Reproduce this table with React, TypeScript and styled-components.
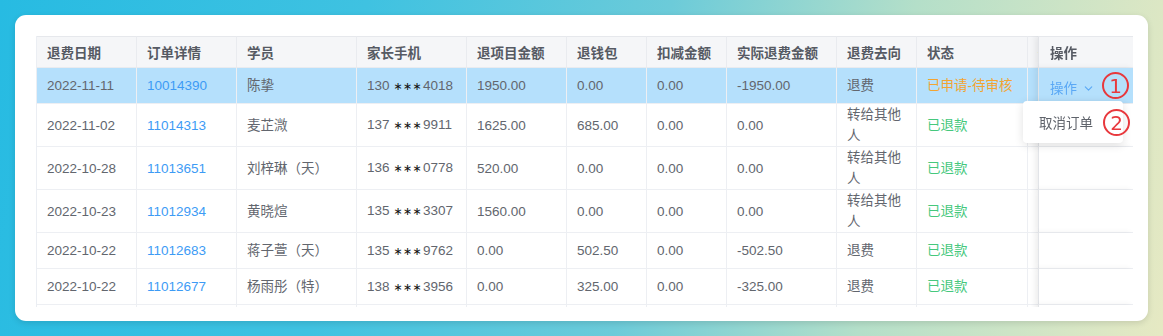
import React from "react";
import styled, { createGlobalStyle } from "styled-components";
import { ChevronDown } from "lucide-react";

const Global = createGlobalStyle`
  html, body { margin: 0; padding: 0; }
  body {
    width: 1163px;
    height: 336px;
    overflow: hidden;
    background: linear-gradient(100deg, #27bbe2 0%, #3fc2e1 30%, #6ccbd9 55%, #b4dfc9 75%, #e6e9c3 100%);
    font-family: "Liberation Sans", "Noto Sans CJK SC", sans-serif;
  }
`;

const Page = styled.div`
  padding: 15px;
`;

const Card = styled.div`
  width: 1133px;
  height: 306px;
  box-sizing: border-box;
  background: #fff;
  border-radius: 11px;
  box-shadow: 0 2px 6px rgba(0, 0, 0, 0.12);
  padding: 21px 15px 14px 21px;
`;

const TableArea = styled.div`
  position: relative;
  width: 1097px;
  height: 271px;
`;

const ScrollBox = styled.div`
  width: 100%;
  height: 100%;
  overflow: hidden;
  border-left: 1px solid #ebeef3;
  box-sizing: border-box;
`;

const Table = styled.table`
  border-collapse: separate;
  border-spacing: 0;
  table-layout: fixed;
  width: 1186px;
  font-size: 13.5px;
`;

const Th = styled.th<{ $fixed?: boolean }>`
  height: 30px;
  padding: 0 10px;
  text-align: left;
  font-weight: 600;
  color: #565a63;
  background: #f5f6f8;
  border-top: 1px solid #e6e8ec;
  border-bottom: 1px solid #e9ebef;
  border-right: 1px solid #e9ebef;
  white-space: nowrap;
  overflow: hidden;
  ${(p) =>
    p.$fixed &&
    `
    position: sticky;
    right: 0;
    z-index: 2;
    padding-left: 11px;
    border-right: none;
    border-left: 1px solid #e2e4e8;
    box-shadow: -3px 0 6px rgba(0,0,0,0.07);
  `}
`;

const Tr = styled.tr<{ $active?: boolean }>`
  & > td {
    background: ${(p) => (p.$active ? "#b5e0fc" : "#fff")};
  }
`;

const Td = styled.td<{ $fixed?: boolean; $tone?: "link" | "warn" | "ok" }>`
  height: 35px;
  padding: 0 10px;
  line-height: 21px;
  color: ${(p) =>
    p.$tone === "link"
      ? "#3d9bf5"
      : p.$tone === "warn"
      ? "#f3a431"
      : p.$tone === "ok"
      ? "#46c87d"
      : "#62666e"};
  border-bottom: 1px solid #edeff3;
  border-right: 1px solid #edeff3;
  vertical-align: middle;
  overflow: hidden;
  ${(p) =>
    p.$fixed &&
    `
    position: sticky;
    right: 0;
    z-index: 2;
    padding: 0 0 0 11px;
    white-space: nowrap;
    border-right: none;
    border-left: 1px solid #e2e4e8;
    box-shadow: -3px 0 6px rgba(0,0,0,0.07);
  `}
`;

const Stars = styled.span`
  color: #111;
  font-family: "DejaVu Sans", sans-serif;
  font-size: 11px;
  margin: 0 1px 0 4px;
  letter-spacing: 0.3px;
`;

const OpTrigger = styled.span`
  display: inline-flex;
  align-items: center;
  color: #5aa8f5;
  gap: 5px;
`;

const Mark = styled.span`
  display: inline-flex;
  align-items: center;
  justify-content: center;
  box-sizing: border-box;
  width: 27px;
  height: 27px;
  border: 2px solid #e8383d;
  border-radius: 50%;
  color: #e8383d;
  font-family: "DejaVu Sans", sans-serif;
  font-size: 20px;
  line-height: 1;
`;

const TriggerMark = styled(Mark)`
  margin-left: 7px;
`;

const Dropdown = styled.div`
  position: absolute;
  left: 987px;
  top: 65px;
  width: 100px;
  height: 42px;
  box-sizing: border-box;
  background: #fff;
  border-radius: 4px;
  box-shadow: 0 2px 10px rgba(0, 0, 0, 0.12);
  display: flex;
  align-items: center;
  padding-left: 16px;
  font-size: 13.5px;
  color: #5f636b;
  z-index: 5;
`;

const DropMark = styled(Mark)`
  position: absolute;
  left: 80px;
  top: 8px;
`;

type Row = {
  date: string;
  order: string;
  name: string;
  p1: string;
  p2: string;
  item: string;
  wallet: string;
  deduct: string;
  actual: string;
  dest: string;
  status: string;
  statusTone?: "warn" | "ok";
  extra: string;
  active?: boolean;
};

const rows: Row[] = [
  { date: "2022-11-11", order: "10014390", name: "陈挚", p1: "130", p2: "4018", item: "1950.00", wallet: "0.00", deduct: "0.00", actual: "-1950.00", dest: "退费", status: "已申请-待审核", statusTone: "warn", extra: "", active: true },
  { date: "2022-11-02", order: "11014313", name: "麦芷溦", p1: "137", p2: "9911", item: "1625.00", wallet: "685.00", deduct: "0.00", actual: "0.00", dest: "转给其他人", status: "已退款", statusTone: "ok", extra: "" },
  { date: "2022-10-28", order: "11013651", name: "刘梓琳（天）", p1: "136", p2: "0778", item: "520.00", wallet: "0.00", deduct: "0.00", actual: "0.00", dest: "转给其他人", status: "已退款", statusTone: "ok", extra: "" },
  { date: "2022-10-23", order: "11012934", name: "黄晓煊", p1: "135", p2: "3307", item: "1560.00", wallet: "0.00", deduct: "0.00", actual: "0.00", dest: "转给其他人", status: "已退款", statusTone: "ok", extra: "" },
  { date: "2022-10-22", order: "11012683", name: "蒋子萱（天）", p1: "135", p2: "9762", item: "0.00", wallet: "502.50", deduct: "0.00", actual: "-502.50", dest: "退费", status: "已退款", statusTone: "ok", extra: "代缴" },
  { date: "2022-10-22", order: "11012677", name: "杨雨彤（特）", p1: "138", p2: "3956", item: "0.00", wallet: "325.00", deduct: "0.00", actual: "-325.00", dest: "退费", status: "已退款", statusTone: "ok", extra: "代缴" },
];

const widths = [100, 100, 120, 110, 100, 80, 80, 110, 80, 111, 100, 95];
const headers = ["退费日期", "订单详情", "学员", "家长手机", "退项目金额", "退钱包", "扣减金额", "实际退费金额", "退费去向", "状态", "代缴说明"];

export default function App() {
  return (
    <>
      <Global />
      <Page>
        <Card>
          <TableArea>
            <ScrollBox>
              <Table>
                <colgroup>
                  {widths.map((w, i) => (
                    <col key={i} style={{ width: w }} />
                  ))}
                </colgroup>
                <thead>
                  <tr>
                    {headers.map((h) => (
                      <Th key={h}>{h}</Th>
                    ))}
                    <Th $fixed>操作</Th>
                  </tr>
                </thead>
                <tbody>
                  {rows.map((r, i) => (
                    <Tr key={i} $active={r.active}>
                      <Td>{r.date}</Td>
                      <Td $tone="link">{r.order}</Td>
                      <Td>{r.name}</Td>
                      <Td>
                        {r.p1}
                        <Stars>∗∗∗</Stars>
                        {r.p2}
                      </Td>
                      <Td>{r.item}</Td>
                      <Td>{r.wallet}</Td>
                      <Td>{r.deduct}</Td>
                      <Td>{r.actual}</Td>
                      <Td>{r.dest}</Td>
                      <Td $tone={r.statusTone}>{r.status}</Td>
                      <Td>{r.extra}</Td>
                      <Td $fixed>
                        {r.active && (
                          <>
                            <OpTrigger>
                              操作
                              <ChevronDown size={13} strokeWidth={2} />
                            </OpTrigger>
                            <TriggerMark>1</TriggerMark>
                          </>
                        )}
                      </Td>
                    </Tr>
                  ))}
                  <Tr>
                    {widths.slice(0, 11).map((_, i) => (
                      <Td key={i} />
                    ))}
                    <Td $fixed />
                  </Tr>
                </tbody>
              </Table>
            </ScrollBox>
            <Dropdown>
              取消订单
              <DropMark>2</DropMark>
            </Dropdown>
          </TableArea>
        </Card>
      </Page>
    </>
  );
}
